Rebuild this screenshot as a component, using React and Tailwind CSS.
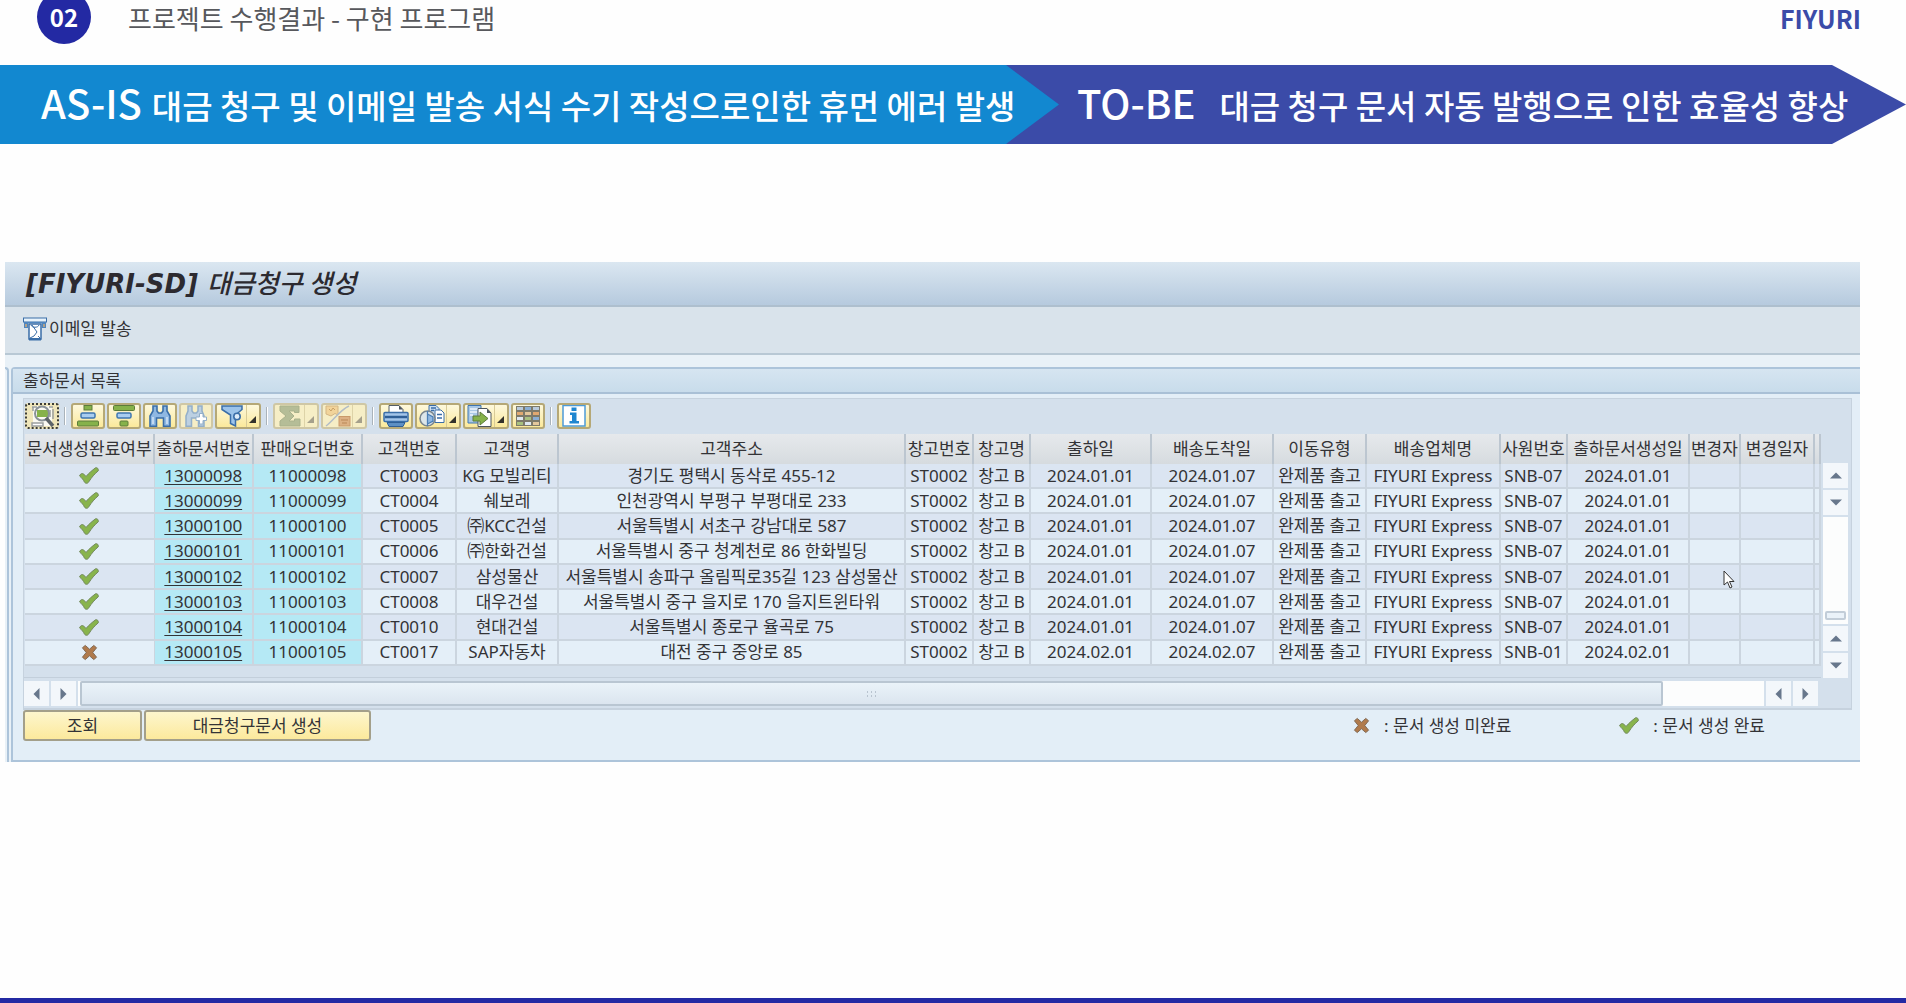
import React from "react";

const FONT = "font-['Noto_Sans','Noto_Sans_CJK_KR',sans-serif]";
const FONT_KR = "font-['Noto_Sans_CJK_KR',sans-serif]";

const COLUMNS = [
  ["문서생성완료여부", 129],
  ["출하문서번호", 99],
  ["판매오더번호", 109],
  ["고객번호", 94],
  ["고객명", 102],
  ["고객주소", 347],
  ["창고번호", 68],
  ["창고명", 57],
  ["출하일", 121],
  ["배송도착일", 122],
  ["이동유형", 93],
  ["배송업체명", 134],
  ["사원번호", 67],
  ["출하문서생성일", 122],
  ["변경자", 51],
  ["변경일자", 74],
  ["", 6],
];

const row = (done, n, cust, name, addr, out, arrive, emp) => ({
  done,
  cells: [`13000${n}`, `11000${n}`, cust, name, addr, "ST0002", "창고 B", out, arrive, "완제품 출고", "FIYURI Express", emp, out, "", "", ""],
});

const ROWS = [
  row(true, "098", "CT0003", "KG 모빌리티", "경기도 평택시 동삭로 455-12", "2024.01.01", "2024.01.07", "SNB-07"),
  row(true, "099", "CT0004", "쉐보레", "인천광역시 부평구 부평대로 233", "2024.01.01", "2024.01.07", "SNB-07"),
  row(true, "100", "CT0005", "㈜KCC건설", "서울특별시 서초구 강남대로 587", "2024.01.01", "2024.01.07", "SNB-07"),
  row(true, "101", "CT0006", "㈜한화건설", "서울특별시 중구 청계천로 86 한화빌딩", "2024.01.01", "2024.01.07", "SNB-07"),
  row(true, "102", "CT0007", "삼성물산", "서울특별시 송파구 올림픽로35길 123 삼성물산", "2024.01.01", "2024.01.07", "SNB-07"),
  row(true, "103", "CT0008", "대우건설", "서울특별시 중구 을지로 170 을지트윈타워", "2024.01.01", "2024.01.07", "SNB-07"),
  row(true, "104", "CT0010", "현대건설", "서울특별시 종로구 율곡로 75", "2024.01.01", "2024.01.07", "SNB-07"),
  row(false, "105", "CT0017", "SAP자동차", "대전 중구 중앙로 85", "2024.02.01", "2024.02.07", "SNB-01"),
];

function Check() {
  return (
    <svg viewBox="0 0 20 17" className="block h-[17px] w-5" role="img" aria-label="완료">
      <path d="M0.600 9 C1.500 6 4 6 5.200 7.500 L7 9.500 C10 6 13 3.500 16.500 0.800 C18.500 0.300 19.600 1.800 19.300 3.800 C15.500 7 12.500 10.500 10 14.500 C8.800 16.800 6.500 16.800 5.400 15 C4.500 13 3 11 0.600 9Z" fill="#88b44c" stroke="#74895f" strokeWidth="1" />
    </svg>
  );
}

function Cross() {
  return (
    <svg viewBox="0 0 18 18" className="block h-[17px] w-[17px]" role="img" aria-label="미완료">
      <path d="M1.500 4 4.500 1.500 9 5.500 13.500 1.500 16.500 4 12.500 9 16.500 14 13.500 16.500 9 12.500 4.500 16.500 1.500 14 5.500 9Z" fill="#b07a4c" stroke="#7e6650" strokeWidth="1" />
    </svg>
  );
}

const svg = "block h-[22px] w-[22px] shrink-0";
const svgWide = "block h-[22px] w-[26px] shrink-0";

const ICONS = {
  detail: (
    <svg viewBox="0 0 26 22" className={svgWide}>
      <path d="M4 1H23V21H4Z" fill="#fbfaf2" />
      <path d="M3 2H8M4 2V6M20 2H24M21 5V12M24 4V14M3 18H14V21H3Z" fill="#fff" stroke="#9a9e9e" strokeWidth="1.500" />
      <rect x="8" y="5" width="11" height="7" fill="#86b24a" />
      <circle cx="13" cy="8.500" r="7" fill="none" stroke="#8a9298" strokeWidth="2" />
      <path d="M17 13 24 21" stroke="#5d6468" strokeWidth="3.500" />
    </svg>
  ),
  asc: (
    <svg viewBox="0 0 22 22" className={svg}>
      <g strokeWidth="1">
        <rect x="7" y="0.500" width="8" height="4.500" fill="#86b24a" stroke="#5c7c3a" />
        <rect x="4" y="8" width="14" height="5" rx="1.500" fill="#a9cdf0" stroke="#3f76b0" strokeWidth="1.500" />
        <rect x="0.500" y="16" width="21" height="5" rx="1" fill="#86b24a" stroke="#5c7c3a" />
      </g>
    </svg>
  ),
  desc: (
    <svg viewBox="0 0 22 22" className={svg}>
      <g strokeWidth="1">
        <rect x="0.500" y="0.500" width="21" height="5" rx="1" fill="#86b24a" stroke="#5c7c3a" />
        <rect x="4" y="8" width="14" height="5" rx="1.500" fill="#a9cdf0" stroke="#3f76b0" strokeWidth="1.500" />
        <rect x="7" y="16" width="8" height="5" rx="1" fill="#86b24a" stroke="#5c7c3a" />
      </g>
    </svg>
  ),
  find: (
    <svg viewBox="0 0 22 22" className={svg}>
      <path d="M4 1H8V6L9.500 8H12.500L14 6V1H18V6L21 11V21.200H14.500V13H7.500V21.200H1V11L4 6Z" fill="#8fb8e2" stroke="#3a6ea8" strokeWidth="1.600" />
      <path d="M4 12V19M18 12V19" stroke="#d5e6f6" strokeWidth="1.500" />
    </svg>
  ),
  findNext: (
    <svg viewBox="0 0 22 22" className={svg}>
      <path d="M3 1H7V6L8.500 8H11.500L13 6V1H17V6L19 11V21.200H13.500V13H6.500V21.200H1V11L3 6Z" fill="#bcd0e2" stroke="#93afc9" strokeWidth="1.500" />
      <path d="M14.500 8.500H18V12H21.500V15.500H18V19H14.500V15.500H11V12H14.500Z" fill="#fff" stroke="#93afc9" />
    </svg>
  ),
  filter: (
    <svg viewBox="0 0 22 22" className={svg}>
      <path d="M1 1H21V4.500L14.500 10V21L9.500 18.500V10L1 4.500Z" fill="#9cc4ea" stroke="#3a6ea8" strokeWidth="1.500" />
      <circle cx="16" cy="11.500" r="3.200" fill="#dcebf8" stroke="#3a6ea8" strokeWidth="1.600" />
    </svg>
  ),
  sum: (
    <svg viewBox="0 0 22 22" className={svg}>
      <path d="M1 1H20V7.500H15.500V6H10L15 11 10 16H15.500V14H21V21H1V16L7 11 1 6Z" fill="#b5bd97" stroke="#a9b18b" />
    </svg>
  ),
  percent: (
    <svg viewBox="0 0 26 22" className={svgWide}>
      <path d="M1 1H13V10L10 8.500 6 11 1 9Z" fill="#f2d49a" stroke="#d4b684" />
      <path d="M4 4 6 6 8 3 10 5" fill="none" stroke="#c9a065" />
      <path d="M1 21C8 16 15 5 24 1" fill="none" stroke="#b3bdc6" strokeWidth="1.500" />
      <rect x="14" y="11.500" width="11" height="9.500" fill="#dcb184" stroke="#c99a6a" />
      <path d="M16 15H23M17 18H22" stroke="#b98757" />
    </svg>
  ),
  print: (
    <svg viewBox="0 0 26 22" className={svgWide}>
      <path d="M6 0.500H16L20 4.500V10H6Z" fill="#fff" stroke="#555e66" />
      <path d="M16 0.500V4.500H20Z" fill="#4a535b" />
      <rect x="1" y="7.500" width="24" height="9" rx="1" fill="#a4c6ea" stroke="#3a6ea8" strokeWidth="1.500" />
      <path d="M2 12H24" stroke="#2f5f96" strokeWidth="2.500" />
      <path d="M4 17.500H22L20 21.500H6Z" fill="#5c8fc4" stroke="#2f5f96" />
    </svg>
  ),
  view: (
    <svg viewBox="0 0 26 22" className={svgWide}>
      <path d="M10 0.500H17L20 3.500V15H10Z" fill="#cfe1f3" stroke="#3a6ea8" />
      <path d="M16 5H22L25 8V17.500H16Z" fill="#fff" stroke="#3a6ea8" />
      <path d="M12 3H17M12 5.500H15M18 9.500H23M18 13H23" stroke="#3a6ea8" strokeWidth="1.500" />
      <circle cx="8.500" cy="13.500" r="7.500" fill="#dce6ea" stroke="#7b868e" strokeWidth="1.600" />
      <path d="M8.500 6V21M8.500 9 14 12V16L8.500 19" fill="#8fb8e2" stroke="#4c7fb5" strokeWidth="1.300" />
    </svg>
  ),
  exportIcon: (
    <svg viewBox="0 0 26 22" className={svgWide}>
      <path d="M1 0.500H14V18H1Z" fill="#a9c8e6" stroke="#3f76b0" />
      <path d="M3 4H11M3 7H10M3 10H6" stroke="#eef5fb" strokeWidth="1.500" />
      <path d="M11 3.500H20L24 8V21.500H11Z" fill="#fff" stroke="#4d565e" />
      <path d="M20 3.500V8H24Z" fill="#4d565e" />
      <path d="M6 11H13V7L21 13.500 13 20V16H6Z" fill="#86b24a" stroke="#5c7c3a" />
    </svg>
  ),
  layout: (
    <svg viewBox="0 0 24 20" className="block h-5 w-6 shrink-0">
      <rect x="0" y="0" width="24" height="20" fill="#7d7a6a" />
      <g>
        <path d="M1 1H7V4H1ZM17 1H23V4H17Z" fill="#b9cadb" />
        <path d="M9 1H15V4H9ZM17 11H23V14H17Z" fill="#8aaed4" />
        <path d="M1 6H7V9H1ZM17 6H23V9H17Z" fill="#e0a870" />
        <path d="M9 6H15V9H9ZM17 16H23V19H17Z" fill="#e3c79c" />
        <path d="M1 11H7V14H1ZM9 16H15V19H9Z" fill="#dfe8f0" />
        <path d="M9 11H15V14H9ZM1 16H7V19H1Z" fill="#a8c07e" />
      </g>
    </svg>
  ),
  info: (
    <svg viewBox="0 0 24 22" className="block h-[22px] w-6 shrink-0">
      <rect x="1" y="0.500" width="22" height="20.500" fill="#fff" stroke="#4d9bd8" strokeWidth="1.500" />
      <path d="M9.500 2.500H14.500V6H9.500ZM8 7.500H14.500V16H17V18.500H7.500V16H10V10H8Z" fill="#1f86d0" />
    </svg>
  ),
};

function ToolButton({ icon, label, menu, disabled, focused }) {
  return (
    <button
      type="button"
      aria-label={label}
      disabled={disabled}
      className={
        "flex h-[26px] shrink-0 items-center justify-center overflow-hidden rounded-[3px] border-2 " +
        (menu ? "w-[46px] " : "w-[34px] ") +
        (disabled
          ? "border-[#cfc7a5] bg-[#f6eec6] "
          : focused
            ? "border-dotted border-[#3c3c36] bg-[#efe6ba] "
            : "border-[#b5a877] bg-linear-to-b from-[#fdf8dc] to-[#fbe99a] ")
      }
    >
      <span className="flex flex-1 justify-center">{ICONS[icon]}</span>
      {menu && (
        <span className={"flex h-full w-[13px] items-end justify-end border-l pr-[3px] pb-1 " + (disabled ? "border-[#ddd3a8]" : "border-[#d8cb98]")}>
          <svg viewBox="0 0 7 7" className="h-[7px] w-[7px]">
            <path d="M7 0V7H0Z" fill={disabled ? "#a5a08c" : "#33312b"} />
          </svg>
        </span>
      )}
    </button>
  );
}

function Divider() {
  return <span className="mx-[3px] h-[18px] w-[2px] border-l border-[#aab3ba] bg-white" />;
}

function ScrollButton({ dir, label }) {
  const vertical = dir === "up" || dir === "down";
  const d = { up: "M6 0.500 12 6.500H0Z", down: "M0 0.500H12L6 6.500Z", left: "M6.500 0V12L0.500 6Z", right: "M0.500 0 6.500 6 0.500 12Z" }[dir];
  return (
    <button type="button" aria-label={label} className="flex h-[25px] w-[25px] shrink-0 items-center justify-center bg-[#f3f7fb]">
      {vertical ? (
        <svg viewBox="0 0 12 7" className="h-[7px] w-3"><path d={d} fill="#67778c" /></svg>
      ) : (
        <svg viewBox="0 0 7 12" className="h-3 w-[7px]"><path d={d} fill="#67778c" /></svg>
      )}
    </button>
  );
}

function ShipmentTable() {
  return (
    <table className="h-[232px] w-full table-fixed border-collapse text-[17px] leading-5 text-[#333336]">
      <colgroup>
        {COLUMNS.map(([name, w], i) => (
          <col key={i} style={{ width: `${(w / 1795) * 100}%` }} />
        ))}
      </colgroup>
      <thead>
        <tr className="h-[30px]">
          {COLUMNS.map(([name], i) => (
            <th key={i} scope="col" className="overflow-visible border-r-2 border-[#bcc6d0] bg-linear-to-b from-[#e6e9ec] to-[#d6dbdf] p-0 text-center font-normal whitespace-nowrap">
              <span className="flex justify-center">{name}</span>
            </th>
          ))}
        </tr>
      </thead>
      <tbody>
        {ROWS.map((r, ri) => (
          <tr key={ri} className={ri % 2 ? "bg-[#e4eff8]" : "bg-[#dbe5f2]"}>
            <td className="border-r border-b-2 border-[#cbd5df] p-0">
              <span className="flex justify-center">{r.done ? <Check /> : <Cross />}</span>
            </td>
            {r.cells.map((c, ci) => (
              <td key={ci} className={"border-r-2 border-b-2 border-[#cbd5df] p-0 whitespace-nowrap " + (ci < 2 ? "bg-[#b5e9f5]" : "")}>
                <span className="flex justify-center">
                  {ci === 0 ? <a href={`#${c}`} className="underline underline-offset-2">{c}</a> : c}
                </span>
              </td>
            ))}
          </tr>
        ))}
      </tbody>
    </table>
  );
}

function ActionButton({ children, className }) {
  return (
    <button type="button" className={"h-[31px] rounded-[3px] border-2 border-[#a39f8a] bg-linear-to-b from-[#fdf6cd] to-[#fce99c] text-[17px] leading-5 " + className}>
      {children}
    </button>
  );
}

export default function App() {
  return (
    <div className={"relative flex min-h-screen flex-col overflow-hidden bg-[#fefefe] text-[#333336] " + FONT}>
      <header className={"flex h-[65px] items-start justify-between pr-[45px] pl-[37px] " + FONT_KR}>
        <div className="flex items-start">
          <span className="-mt-[10px] flex h-[54px] w-[54px] items-center justify-center rounded-full bg-[#2329a3] text-2xl leading-8 font-bold text-white">02</span>
          <h1 className="ml-[37px] text-[26px] leading-9 text-[#57585c]">프로젝트 수행결과 - 구현 프로그램</h1>
        </div>
        <strong className="text-[25px] leading-9 font-bold text-[#3b4ba8]">FIYURI</strong>
      </header>

      <section className={"flex h-[79px] bg-[#3b4ba8] text-white [clip-path:polygon(0_0,calc(100%-74px)_0,100%_50%,calc(100%-74px)_100%,0_100%)] " + FONT_KR}>
        <div className="flex w-[1059px] shrink-0 items-baseline bg-[#1288d0] pl-[41px] font-medium whitespace-nowrap [clip-path:polygon(0_0,calc(100%-53px)_0,100%_50%,calc(100%-53px)_100%,0_100%)]">
          <span className="text-[40px] leading-[75px]">AS-IS</span>
          <span className="ml-[10px] text-[33px]">대금 청구 및 이메일 발송 서식 수기 작성으로인한 휴먼 에러 발생</span>
        </div>
        <div className="flex flex-1 items-baseline pl-[18px] font-medium whitespace-nowrap">
          <span className="text-[40px] leading-[75px]">TO-BE</span>
          <span className="ml-6 text-[33px]">대금 청구 문서 자동 발행으로 인한 효율성 향상</span>
        </div>
      </section>

      <main className="mt-[118px] mr-[46px] ml-[5px] flex flex-col bg-[#e9f1f7]">
        <div className="flex h-[45px] items-start border-b-2 border-[#aebfce] bg-linear-to-b from-[#dbe7f1] to-[#b6cade] pt-1 pl-[21px]">
          <h2 className="text-[26px] leading-8 font-bold italic text-[#2c2a30] font-['DejaVu_Sans','Noto_Sans_CJK_KR',sans-serif]">
            [FIYURI-SD] <span className={"font-medium " + FONT_KR}>대금청구 생성</span>
          </h2>
        </div>
        <div className="flex h-[48px] items-start border-b-2 border-[#b8c8d4] bg-[#d9e3eb] pt-[10px] pl-[18px]">
          <button type="button" className="flex items-center gap-[2px] text-[17px] leading-6">
            <svg viewBox="0 0 24 24" className="h-6 w-6">
              <rect x="0.500" y="1" width="23" height="4" fill="#e8f3fb" stroke="#3a6ea8" />
              <path d="M1 5H23V11H19V6H5V11H1Z" fill="#4f86bf" />
              <path d="M2 7H4V10H2ZM20 7H22V10H20Z" fill="#b0a089" />
              <path d="M6 7H18V22H6Z" fill="#fff" stroke="#3a6ea8" strokeWidth="1.500" />
              <path d="M8 8C9 11 15 11 16 8M9 8 14 15 11 19 7 21M15 19 17 21" fill="none" stroke="#3a6ea8" />
              <path d="M6 21H18V23.500H6Z" fill="#3a6ea8" />
            </svg>
            이메일 발송
          </button>
        </div>

        <div className="mt-3 flex">
          <div className="w-1 shrink-0 rounded-tr border-t-2 border-r-2 border-[#adc4da]" />
          <section className="ml-[2px] flex min-w-0 flex-1 flex-col rounded-tl border-t-2 border-b-2 border-l-2 border-[#adc4da] bg-[#e3eef7]">
            <h3 className="flex h-[25px] items-center border-b-2 border-[#a9c0d6] bg-linear-to-b from-[#d6e5f1] to-[#c8dceb] pl-[10px] text-[17px] leading-5">출하문서 목록</h3>

            <div className="mt-1 mr-2 ml-[10px] flex flex-col border border-b-2 border-[#c6d2de] bg-[#d4e0ec]">
              <div className="flex h-[35px] items-start gap-[2px] pt-1 pl-px">
                <ToolButton icon="detail" label="상세" focused />
                <div className="flex h-[26px] items-center"><Divider /></div>
                <ToolButton icon="asc" label="오름차순 정렬" />
                <ToolButton icon="desc" label="내림차순 정렬" />
                <ToolButton icon="find" label="찾기" />
                <ToolButton icon="findNext" label="다음 찾기" disabled />
                <ToolButton icon="filter" label="필터" menu />
                <div className="flex h-[26px] items-center"><Divider /></div>
                <ToolButton icon="sum" label="합계" menu disabled />
                <ToolButton icon="percent" label="소계" menu disabled />
                <div className="flex h-[26px] items-center"><Divider /></div>
                <ToolButton icon="print" label="인쇄" />
                <ToolButton icon="view" label="보기" menu />
                <ToolButton icon="exportIcon" label="내보내기" menu />
                <ToolButton icon="layout" label="레이아웃" />
                <div className="flex h-[26px] items-center"><Divider /></div>
                <ToolButton icon="info" label="정보" />
              </div>

              <div className="flex">
                <div className="min-w-0 flex-1 border-b border-[#c3cfdb] pb-[11px] pl-px">
                  <ShipmentTable />
                </div>
                <div className="ml-[2px] flex w-[28px] flex-col gap-[2px] pt-[29px]">
                  <ScrollButton dir="up" label="위로" />
                  <ScrollButton dir="down" label="아래로" />
                  <div className="flex w-[25px] flex-1 flex-col justify-end bg-[#fcfdfd] pb-1">
                    <div className="mx-[2px] h-[9px] rounded-[2px] border-2 border-[#c2cdd8] bg-[#eaf2f9]" />
                  </div>
                  <ScrollButton dir="up" label="이전" />
                  <ScrollButton dir="down" label="다음" />
                </div>
              </div>

              <div className="mt-[3px] mr-[33px] mb-[2px] flex gap-[2px]">
                <ScrollButton dir="left" label="왼쪽으로" />
                <ScrollButton dir="right" label="오른쪽으로" />
                <div className="flex h-[25px] flex-1 bg-[#fcfdfd] pl-[2px]">
                  <div className="flex w-[94%] items-center justify-center rounded-[2px] border-2 border-[#b9c6d2] bg-linear-to-b from-[#eaf3f9] to-[#dbe5ef]">
                    <svg viewBox="0 0 10 6" className="h-[6px] w-[10px]">
                      <path d="M1 1H2M5 1H6M9 1H10M1 5H2M5 5H6M9 5H10" stroke="#8f9cab" />
                    </svg>
                  </div>
                </div>
                <ScrollButton dir="left" label="왼쪽 끝" />
                <ScrollButton dir="right" label="오른쪽 끝" />
              </div>
            </div>

            <div className="flex h-[50px] items-start justify-between pr-[95px] pl-[10px]">
              <div className="flex gap-[2px]">
                <ActionButton className="w-[119px]">조회</ActionButton>
                <ActionButton className="w-[227px]">대금청구문서 생성</ActionButton>
              </div>
              <div className="flex h-[31px] items-center gap-[108px] text-[17px] leading-5">
                <span className="flex items-center gap-[14px]"><Cross />: 문서 생성 미완료</span>
                <span className="flex items-center gap-[14px]"><Check />: 문서 생성 완료</span>
              </div>
            </div>
          </section>
        </div>
      </main>

      <footer className="mt-auto h-[5px] bg-[#2329a3]" />

      <svg viewBox="0 0 12 19" className="absolute top-[570px] left-[1723px] h-[19px] w-3" aria-hidden="true">
        <path d="M1 1V15L4.500 12 7 18 9 17 6.500 11.500H11Z" fill="#fff" stroke="#333" />
      </svg>
    </div>
  );
}
